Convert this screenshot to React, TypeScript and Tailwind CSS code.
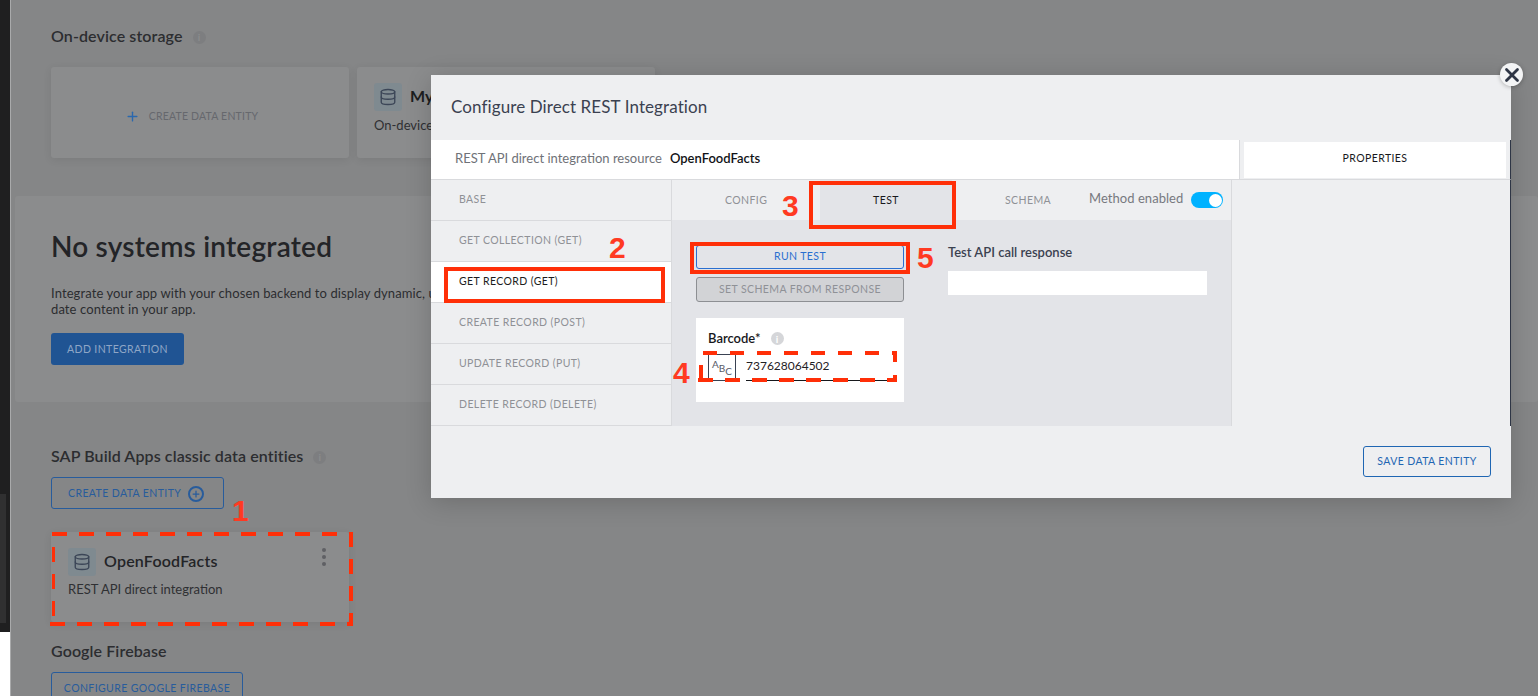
import React from "react";
import { Database, Plus, X } from "lucide-react";

const FONT = "font-['Lato','Noto_Sans',sans-serif]";

function Info({ size = "w-[13px] h-[13px]", bg = "bg-[#7d7e80]", fg = "text-[#8b8c8d]" }: { size?: string; bg?: string; fg?: string }) {
  return (
    <span className={`${size} ${bg} ${fg} rounded-full inline-flex items-center justify-center text-[10px] font-bold leading-none`}>i</span>
  );
}

function DbIcon() {
  return (
    <span className="w-[28px] h-[28px] rounded-[3px] bg-[#7f8a90] flex items-center justify-center shrink-0">
      <Database size={18} strokeWidth={1.8} className="text-[#3c4657]" />
    </span>
  );
}

function Heading({ children, info = true }: { children: React.ReactNode; info?: boolean }) {
  return (
    <div className="h-[24px] flex items-center gap-[10px] text-[16px] font-semibold text-[#2c2d30] tracking-[0.1px]">
      <span className="pb-[2px]">{children}</span>
      {info && <Info />}
    </div>
  );
}

function NavItem({ label, active }: { label: string; active?: boolean }) {
  return (
    <div className={`h-[41px] pl-[28px] pt-[11px] text-[10.5px] tracking-[0.4px] leading-[16px] border-b border-[#d9dadd] ${active ? "bg-white text-[#1b1c20]" : "text-[#8f9196]"}`}>
      {label}
    </div>
  );
}

function Outline({ className }: { className: string }) {
  return <div className={`absolute border-[4px] border-[#ff2f08] pointer-events-none ${className}`} />;
}

function Num({ n, className }: { n: number; className: string }) {
  return (
    <div className={`absolute text-[#ff3a22] text-[30px] leading-none font-bold font-['Liberation_Sans',sans-serif] ${className}`}>{n}</div>
  );
}

function Modal() {
  return (
    <div className="absolute left-[431px] top-[75px] w-[1080px] h-[423px] bg-[#eeeff1] shadow-[0_4px_24px_rgba(0,0,0,0.18)] flex flex-col">
      <div className="h-[65px] shrink-0 pl-[20px] pb-[2px] flex items-center text-[17px] text-[#3b4150] tracking-[0.1px]">
        Configure Direct REST Integration
      </div>
      <div className="flex h-[40px] shrink-0 bg-white border-b border-[#d9dadd] border-r border-r-[#2e3545]">
        <div className="w-[809px] flex items-center pl-[24px] pb-[2px] gap-[8px] text-[13px] border-r border-[#d9dadd]">
          <span className="text-[#6f7278]">REST API direct integration resource</span>
          <span className="text-[#111216] font-semibold">OpenFoodFacts</span>
        </div>
        <div className="flex-1 pt-[2px] bg-[#eeeff1] px-[4px]">
          <div className="h-[36px] pb-[2px] bg-white flex items-center justify-center text-[10.5px] tracking-[0.4px] text-[#17181c]">PROPERTIES</div>
        </div>
      </div>
      <div className="flex h-[246px] shrink-0 border-r border-r-[#2e3545]">
        <div className="w-[241px] shrink-0 border-r border-[#d9dadd]">
          <NavItem label="BASE" />
          <NavItem label="GET COLLECTION (GET)" />
          <NavItem label="GET RECORD (GET)" active />
          <NavItem label="CREATE RECORD (POST)" />
          <NavItem label="UPDATE RECORD (PUT)" />
          <NavItem label="DELETE RECORD (DELETE)" />
        </div>
        <div className="w-[560px] shrink-0 flex flex-col border-r border-[#d9dadd]">
          <div className="h-[40px] shrink-0 flex items-center text-[10.5px] tracking-[0.4px] text-[#8f9196]">
            <div className="w-[148px] pl-[53px] pt-[2px]">CONFIG</div>
            <div className="w-[132px] h-[40px] pt-[2px] bg-[#e3e4e8] flex items-center justify-center text-[#17181c]">TEST</div>
            <div className="w-[137px] pl-[53px] pt-[2px]">SCHEMA</div>
            <div className="flex items-center gap-[8px] text-[13px] tracking-[0.05px] text-[#77797f]">
              <span className="pb-[2px]">Method enabled</span>
              <span className="w-[32px] h-[16px] rounded-full bg-[#00b2ff] flex items-center justify-end pr-[1px]">
                <span className="w-[13px] h-[13px] rounded-full bg-white" />
              </span>
            </div>
          </div>
          <div className="flex-1 bg-[#e3e4e8] flex pl-[24px] pt-[25px]">
            <div className="w-[208px] shrink-0">
              <div className="h-[24px] rounded-[3px] border border-[#2a6fd0] flex items-center justify-center text-[10.5px] tracking-[0.4px] text-[#2a6fd0]">RUN TEST</div>
              <div className="mt-[8px] h-[25px] rounded-[3px] bg-[#d2d3d6] border border-[#8d8f93] flex items-center justify-center text-[10.5px] tracking-[0.4px] text-[#8f9196]">SET SCHEMA FROM RESPONSE</div>
              <div className="mt-[16px] h-[84px] bg-white pl-[12px] pt-[12px]">
                <div className="flex items-center gap-[10px] h-[17px] text-[13px] font-semibold text-[#17181c]">
                  <span>Barcode*</span>
                  <Info size="w-[13px] h-[13px]" bg="bg-[#d5d6d9]" fg="text-white" />
                </div>
                <div className="flex mt-[7px] h-[27px]">
                  <div className="w-[28px] border border-[#3a4252] flex items-start justify-center pt-[4px] text-[10px] leading-none text-[#565a66]">
                    <span>A</span><span className="mt-[4px]">B</span><span className="mt-[7px]">C</span>
                  </div>
                  <div className="w-[146px] ml-[10px] border-b border-[#17181c] text-[12px] text-[#1f2024] leading-[24px]">737628064502</div>
                </div>
              </div>
            </div>
            <div className="ml-[44px] w-[259px]">
              <div className="text-[13px] font-semibold text-[#3b4150] leading-[16px] mt-[-1px]">Test API call response</div>
              <div className="mt-[11px] h-[24px] bg-white" />
            </div>
          </div>
        </div>
        <div className="flex-1" />
      </div>
      <div className="flex-1 flex justify-end items-start pt-[20px] pr-[20px]">
        <div className="w-[128px] h-[31px] rounded-[3px] border border-[#1f66b3] flex items-center justify-center text-[10.5px] tracking-[0.4px] text-[#1f66b3]">SAVE DATA ENTITY</div>
      </div>
    </div>
  );
}

export default function App() {
  return (
    <div className={`relative w-[1538px] h-[696px] overflow-hidden flex bg-[#858687] ${FONT}`}>
      <div className="w-[11px] shrink-0 flex flex-col border-r border-[#a9aaab]">
        <div className="h-[494px] bg-[#1f1f20]" />
        <div className="h-[129px] bg-[#1f1f20] flex">
          <div className="w-[6px] bg-[#303031]" />
        </div>
        <div className="h-[9px] bg-[#1f1f20]" />
        <div className="flex-1 bg-white" />
      </div>
      <main className="flex-1 pl-[4px] min-w-0">
        <section className="pl-[36px] pt-[25px]">
          <Heading>On-device storage</Heading>
          <div className="mt-[18px] flex gap-[8px]">
            <div className="w-[298px] h-[91px] rounded-[3px] bg-[#8b8c8d] shadow-[0_2px_8px_rgba(0,0,0,0.08)] flex items-center justify-center gap-[9px] pt-[8px] pr-[17px] text-[10.5px] tracking-[0.2px] text-[#66686d]">
              <Plus size={15} strokeWidth={2.2} className="text-[#2a68ae]" />
              <span>CREATE DATA ENTITY</span>
            </div>
            <div className="w-[298px] h-[91px] rounded-[3px] bg-[#8b8c8d] shadow-[0_2px_8px_rgba(0,0,0,0.08)] pl-[17px] pt-[16px]">
              <div className="flex items-center gap-[8px]">
                <DbIcon />
                <span className="text-[16px] font-bold text-[#1d1e20] pb-[2px]">My</span>
              </div>
              <div className="mt-[5px] text-[13px] text-[#2f3033]">On-device</div>
            </div>
          </div>
        </section>
        <section className="mt-[38px] h-[206px] rounded-[3px] bg-[#8b8c8d] pl-[36px] pt-[32px]">
          <h2 className="text-[28px] leading-[36px] font-semibold text-[#232427] tracking-[0.2px]">No systems integrated</h2>
          <p className="mt-[21px] w-[480px] text-[13px] leading-[16px] text-[#2c2d30] tracking-[0.1px]">
            Integrate your app with your chosen backend to display dynamic, up-to-
            <br />
            date content in your app.
          </p>
          <div className="mt-[16px] w-[133px] h-[32px] pt-[1px] rounded-[3px] bg-[#205493] flex items-center justify-center text-[10.5px] tracking-[0.4px] text-[#8fa6c6]">ADD INTEGRATION</div>
        </section>
        <section className="pl-[36px] mt-[43px]">
          <Heading>SAP Build Apps classic data entities</Heading>
          <div className="mt-[8px] w-[173px] h-[32px] pl-[16px] pt-[1px] rounded-[3px] border border-[#285c9c] flex items-center gap-[7px] text-[10.5px] tracking-[0.4px] text-[#285c9c]">
            <span>CREATE DATA ENTITY</span>
            <span className="w-[16px] h-[16px] rounded-full border-2 border-[#285c9c] flex items-center justify-center">
              <Plus size={10} strokeWidth={3} />
            </span>
          </div>
          <div className="mt-[23px] w-[298px] h-[90px] rounded-[3px] bg-[#8b8c8d] shadow-[0_2px_8px_rgba(0,0,0,0.08)] pl-[17px] pt-[16px] pr-[23px] flex flex-col">
            <div className="flex items-center gap-[8px]">
              <DbIcon />
              <span className="flex-1 text-[16px] font-semibold text-[#232427] tracking-[0.2px] pb-[2px]">OpenFoodFacts</span>
              <span className="flex flex-col gap-[3px] -mt-[10px]">
                <i className="w-[4px] h-[4px] rounded-full bg-[#5f6064] block" />
                <i className="w-[4px] h-[4px] rounded-full bg-[#5f6064] block" />
                <i className="w-[4px] h-[4px] rounded-full bg-[#5f6064] block" />
              </span>
            </div>
            <div className="mt-[4px] text-[13px] text-[#2f3033]">REST API direct integration</div>
          </div>
          <div className="mt-[18px]"><Heading info={false}>Google Firebase</Heading></div>
          <div className="mt-[8px] w-[192px] h-[34px] rounded-[3px] border border-[#285c9c] flex items-center justify-center text-[10.5px] tracking-[0.4px] text-[#285c9c]">CONFIGURE GOOGLE FIREBASE</div>
        </section>
      </main>

      <Modal />

      <div className="absolute left-[1500px] top-[63px] w-[23px] h-[23px] rounded-full bg-[#f3f4f5] flex items-center justify-center shadow-[0_1px_4px_rgba(0,0,0,0.25)]">
        <X size={22} strokeWidth={3} className="text-[#2e3545]" />
      </div>

      <Outline className="left-[444px] top-[267px] w-[221px] h-[36px]" />
      <Outline className="left-[809px] top-[181px] w-[147px] h-[48px]" />
      <Outline className="left-[690px] top-[242px] w-[220px] h-[32px]" />

      <svg className="absolute left-0 top-0 pointer-events-none" width="1538" height="696" fill="none" stroke="#ff2f08">
        <g strokeWidth="4" strokeDasharray="15 12">
          <path d="M52 534H353" />
          <path d="M351 532V626" />
          <path d="M50 624H353" />
        </g>
        <path d="M53.5 547V622" strokeWidth="3" strokeDasharray="15 12" />
        <g strokeWidth="4">
          <path d="M703 353H897" strokeDasharray="14 13" />
          <path d="M895 351V362M895 375V382" />
          <path d="M698 380H897" strokeDasharray="15 12" />
          <path d="M701 365V382" />
        </g>
      </svg>

      <Num n={1} className="left-[232px] top-[496px]" />
      <Num n={2} className="left-[609px] top-[233px]" />
      <Num n={3} className="left-[782px] top-[191px]" />
      <Num n={4} className="left-[673px] top-[358px]" />
      <Num n={5} className="left-[917px] top-[243px]" />
    </div>
  );
}
